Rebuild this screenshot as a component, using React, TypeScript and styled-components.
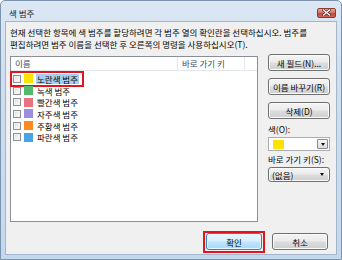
import React from "react";
import styled, { createGlobalStyle, css } from "styled-components";

const Global = createGlobalStyle`
  html, body { margin: 0; padding: 0; background: #ffffff; }
  body { font-family: "Noto Sans CJK KR", "Noto Sans", sans-serif; }
  * { box-sizing: border-box; }
`;

const FONT = `"Noto Sans CJK KR", "Noto Sans", sans-serif`;
const INK = "#050505";

const Window = styled.div`
  width: 342px;
  height: 260px;
  border: 1px solid #7c92ad;
  border-radius: 5px 5px 0 0;
  background: linear-gradient(180deg, #dce7f4 0%, #cfdff0 30%, #c4d8ee 100%);
  display: flex;
  flex-direction: column;
  padding: 0 4px 4px 4px;
  font-family: ${FONT};
  color: ${INK};
`;

const TitleBar = styled.div`
  height: 20px;
  display: flex;
  align-items: center;
  justify-content: space-between;
  padding: 3px 1px 0 4px;
`;

const Title = styled.span`
  font-size: 8.5px;
  color: #18202c;
`;

const CloseButton = styled.div`
  width: 19px;
  height: 10px;
  border: 1px solid #8a3b33;
  border-radius: 2px;
  background: linear-gradient(180deg, #e8a89e 0%, #d7736a 45%, #c24a3c 55%, #d0645a 100%);
  display: flex;
  align-items: center;
  justify-content: center;
`;

const Client = styled.div`
  flex: 1;
  background: #f0f0f0;
  border: 1px solid #a3b5ca;
  display: flex;
  flex-direction: column;
  padding: 4px;
  font-size: 8.5px;
`;

const Description = styled.p`
  margin: 0;
  line-height: 12px;
  height: 24px;
  white-space: nowrap;
  font-size: 8.5px;
  color: ${INK};
`;

const MainRow = styled.div`
  margin-top: 4px;
  display: flex;
  align-items: flex-start;
`;

const ListBox = styled.div`
  margin-top: 2px;
  width: 248px;
  height: 166px;
  background: #ffffff;
  border: 1px solid #8a8e96;
  display: flex;
  flex-direction: column;
`;

const Header = styled.div`
  height: 14px;
  display: flex;
  border-bottom: 1px solid #e3e6ea;
`;

const HeaderCell = styled.div<{ $w?: number }>`
  ${(p) => (p.$w ? css`width: ${p.$w}px;` : css`flex: 1;`)}
  height: 100%;
  border-right: 1px solid #e3e6ea;
  padding-left: 4px;
  font-size: 8.5px;
  line-height: 13px;
  color: #3f4a58;
  &:last-child { border-right: none; }
`;

const Body = styled.div`
  padding-top: 2px;
  display: flex;
  flex-direction: column;
`;

const Row = styled.div`
  position: relative;
  height: 11.7px;
  display: flex;
  align-items: center;
  padding-left: 2px;
`;

const Check = styled.span`
  width: 8px;
  height: 8px;
  border: 1px solid #8f9091;
  background: linear-gradient(135deg, #d6d6d6 0%, #f4f4f4 60%, #ffffff 100%);
  box-shadow: inset 0 0 0 1px #f3f3f3;
`;

const Swatch = styled.span<{ $c: string }>`
  width: 9px;
  height: 9px;
  margin-left: 3px;
  background: ${(p) => p.$c};
`;

const Name = styled.span<{ $sel?: boolean }>`
  margin-left: 3px;
  padding: 0 1px;
  font-size: 8.5px;
  line-height: 10px;
  color: ${INK};
  ${(p) => p.$sel && css`background: #a7cdf0;`}
`;

const RowMark = styled.span`
  position: absolute;
  left: -1px;
  top: -2px;
  width: 74px;
  height: 16px;
  border: 2px solid #e3141c;
  pointer-events: none;
`;

const Side = styled.div`
  margin-left: 10px;
  width: 62px;
  display: flex;
  flex-direction: column;
`;

const buttonBase = css`
  height: 17px;
  border: 1px solid #707070;
  border-radius: 3px;
  background: linear-gradient(180deg, #f4f4f4 0%, #ebebeb 48%, #dddddd 52%, #cfcfcf 100%);
  box-shadow: inset 0 0 0 1px #fbfbfb;
  display: flex;
  align-items: center;
  justify-content: center;
  font-size: 8.5px;
  color: ${INK};
  white-space: nowrap;
`;

const SideButton = styled.div`
  ${buttonBase}
  & + & { margin-top: 7px; }
`;

const Label = styled.div<{ $top: number }>`
  margin-top: ${(p) => p.$top}px;
  height: 12px;
  line-height: 12px;
  font-size: 8.5px;
  color: ${INK};
  white-space: nowrap;
`;

const ColorBox = styled.div`
  margin-top: 2px;
  height: 14px;
  background: #ffffff;
  border: 1px solid #abadb3;
  display: flex;
  align-items: center;
  justify-content: space-between;
  padding: 0 1px 0 4px;
`;

const ColorChip = styled.span`
  width: 11px;
  height: 9px;
  background: #fde300;
`;

const DropBtn = styled.span`
  width: 11px;
  height: 10px;
  border: 1px solid #8a8a8a;
  border-radius: 1px;
  background: linear-gradient(180deg, #f6f6f6, #dcdcdc);
  display: flex;
  align-items: center;
  justify-content: center;
`;

const Arrow = styled.span`
  width: 0;
  height: 0;
  border-left: 2.5px solid transparent;
  border-right: 2.5px solid transparent;
  border-top: 3px solid #111;
`;

const Select = styled.div`
  ${buttonBase}
  margin-top: 2px;
  height: 15px;
  justify-content: space-between;
  padding: 0 5px 0 3px;
`;

const Footer = styled.div`
  margin-top: 11px;
  display: flex;
  justify-content: flex-end;
  gap: 10px;
  padding-right: 4px;
`;

const MarkWrap = styled.div`
  position: relative;
  &::after {
    content: "";
    position: absolute;
    inset: -2px -3px -3px -3px;
    border: 2px solid #e3141c;
    pointer-events: none;
  }
`;

const FooterButton = styled.div<{ $default?: boolean }>`
  ${buttonBase}
  width: 56px;
  ${(p) =>
    p.$default &&
    css`
      border-color: #3c7fb1;
      background: linear-gradient(180deg, #eaf6fd 0%, #d9f0fc 48%, #bee6fd 52%, #a7d9f5 100%);
      box-shadow: inset 0 0 0 1px #e8f5fc;
    `}
`;

const categories = [
  { name: "노란색 범주", color: "#fde300", sel: true },
  { name: "녹색 범주", color: "#55b96e" },
  { name: "빨간색 범주", color: "#e8727e" },
  { name: "자주색 범주", color: "#9d8fe0" },
  { name: "주황색 범주", color: "#fd8a1c" },
  { name: "파란색 범주", color: "#48a4e4" },
];

export default function App() {
  return (
    <>
      <Global />
      <Window>
        <TitleBar>
          <Title>색 범주</Title>
          <CloseButton>
            <svg width="9" height="7" viewBox="0 0 9 7">
              <path d="M1.5 1 L7.5 6 M7.5 1 L1.5 6" stroke="#5a1f1a" strokeWidth="2.6" strokeLinecap="square" />
              <path d="M1.5 1 L7.5 6 M7.5 1 L1.5 6" stroke="#ffffff" strokeWidth="1.4" strokeLinecap="square" />
            </svg>
          </CloseButton>
        </TitleBar>
        <Client>
          <Description>
            현재 선택한 항목에 색 범주를 할당하려면 각 범주 열의 확인란을 선택하십시오. 범주를
            <br />
            편집하려면 범주 이름을 선택한 후 오른쪽의 명령을 사용하십시오(T).
          </Description>
          <MainRow>
            <ListBox>
              <Header>
                <HeaderCell $w={167}>이름</HeaderCell>
                <HeaderCell $w={67}>바로 가기 키</HeaderCell>
                <HeaderCell />
              </Header>
              <Body>
                {categories.map((c) => (
                  <Row key={c.name}>
                    <Check />
                    <Swatch $c={c.color} />
                    <Name $sel={c.sel}>{c.name}</Name>
                    {c.sel && <RowMark />}
                  </Row>
                ))}
              </Body>
            </ListBox>
            <Side>
              <SideButton>새 필드(N)...</SideButton>
              <SideButton>이름 바꾸기(R)</SideButton>
              <SideButton>삭제(D)</SideButton>
              <Label $top={4}>색(O):</Label>
              <ColorBox>
                <ColorChip />
                <DropBtn>
                  <Arrow />
                </DropBtn>
              </ColorBox>
              <Label $top={2}>바로 가기 키(S):</Label>
              <Select>
                <span>(없음)</span>
                <Arrow />
              </Select>
            </Side>
          </MainRow>
          <Footer>
            <MarkWrap>
              <FooterButton $default>확인</FooterButton>
            </MarkWrap>
            <FooterButton>취소</FooterButton>
          </Footer>
        </Client>
      </Window>
    </>
  );
}
